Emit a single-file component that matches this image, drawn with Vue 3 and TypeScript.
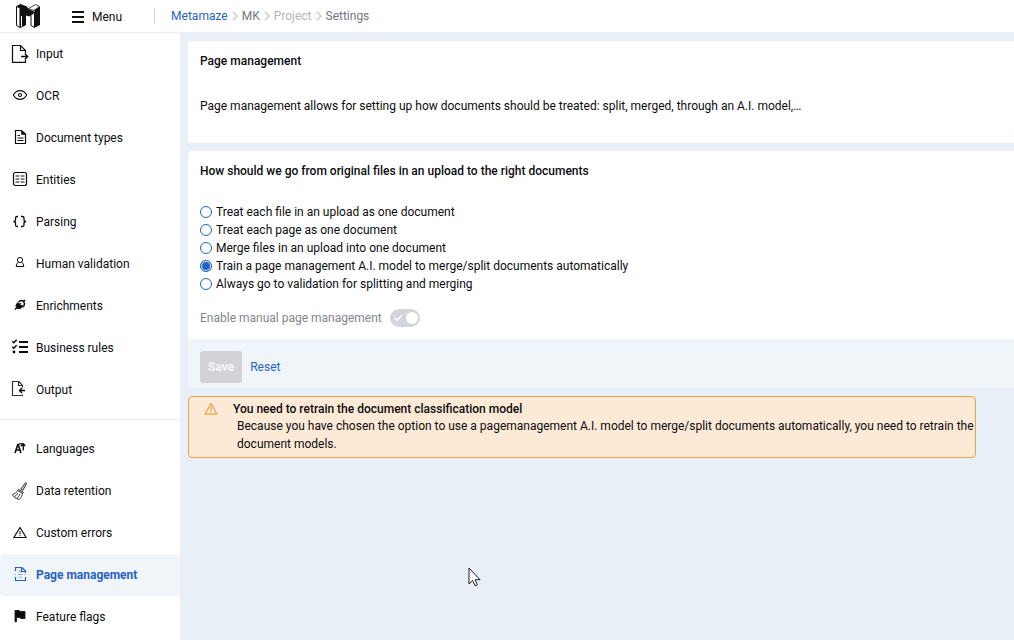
<script setup lang="ts">
import { ref } from 'vue'

interface NavItem {
  label: string
  icon: string
}

const mainItems: NavItem[] = [
  { label: 'Input', icon: 'input' },
  { label: 'OCR', icon: 'eye' },
  { label: 'Document types', icon: 'document' },
  { label: 'Entities', icon: 'table' },
  { label: 'Parsing', icon: 'braces' },
  { label: 'Human validation', icon: 'person' },
  { label: 'Enrichments', icon: 'plug' },
  { label: 'Business rules', icon: 'checklist' },
  { label: 'Output', icon: 'output' },
]

const settingItems: NavItem[] = [
  { label: 'Languages', icon: 'language' },
  { label: 'Data retention', icon: 'broom' },
  { label: 'Custom errors', icon: 'warning' },
  { label: 'Page management', icon: 'page' },
  { label: 'Feature flags', icon: 'flag' },
]

const groups: NavItem[][] = [mainItems, settingItems]
const active = ref('Page management')

const crumbs = [
  { label: 'Metamaze', tone: 'primary' },
  { label: 'MK', tone: 'dark' },
  { label: 'Project', tone: 'light' },
  { label: 'Settings', tone: 'dark' },
]

const options = [
  'Treat each file in an upload as one document',
  'Treat each page as one document',
  'Merge files in an upload into one document',
  'Train a page management A.I. model to merge/split documents automatically',
  'Always go to validation for splitting and merging',
]
const selected = ref(3)
const manual = ref(true)
</script>

<template>
  <div class="app">
    <header class="topbar">
      <a href="#" class="logo" aria-label="Metamaze home">
        <svg width="26" height="26" viewBox="0 0 26 26">
          <path d="M1.5 3.5 5 5V24.500L1.500 22.500Z" fill="#fff" stroke="#111" stroke-width="1" />
          <path d="M1.500 3 5.500 1 12 3.500 13.500 6 19 8.500V10L14.500 13.500 11 12.500V22L6.500 24.500 5 24.500V5Z" fill="#111" />
          <path d="M6.500 13V23.500" stroke="#fff" stroke-width="1" />
          <path d="M13.500 5.500 20.500 1.500 24.500 3.500 19 7.500Z" fill="#fff" stroke="#111" stroke-width=".8" />
          <path d="M16 12.500 19.500 9V24.500L16 22.500Z" fill="#fff" stroke="#111" stroke-width="1" />
          <path d="M19.500 7 25 3.500V22L19.500 24.800Z" fill="#111" />
        </svg>
      </a>
      <button type="button" class="menu">
        <svg width="12" height="12" viewBox="0 0 12 12"><path d="M0 1H12M0 6H12M0 11H12" stroke="#111" stroke-width="2" /></svg>
        Menu
      </button>
      <nav class="crumbs" aria-label="Breadcrumb">
        <template v-for="(c, i) in crumbs" :key="c.label">
          <svg v-if="i" class="chevron" width="6" height="10" viewBox="0 0 6 10"><path d="M1 1 5 5 1 9" fill="none" stroke="#c9cacf" stroke-width="1.500" /></svg>
          <a href="#" :class="c.tone">{{ c.label }}</a>
        </template>
      </nav>
    </header>

    <div class="body">
      <nav class="sidebar" aria-label="Project settings">
        <ul v-for="(group, g) in groups" :key="g">
          <li v-for="item in group" :key="item.label">
            <a href="#" :class="{ active: item.label === active }" @click.prevent="active = item.label">
              <svg width="20" height="20" viewBox="0 0 20 20" fill="none" stroke="currentColor" stroke-width="1.200">
                <template v-if="item.icon === 'input'">
                  <path d="M15.500 16V18.400H2.500V1.500H10.500L15.500 6.500V9M10.500 1.500V6.500H15.500" />
                  <path d="M11 12.500H17.500M14.800 9.500 17.700 12.500 14.800 15.500" stroke-width="1.400" />
                </template>
                <template v-else-if="item.icon === 'eye'">
                  <path d="M3.300 9C5 6 7.300 4.600 10 4.600S15 6 16.700 9C15 12 12.700 13.400 10 13.400S5 12 3.300 9Z" stroke-width="1.100" />
                  <circle cx="10" cy="9" r="1.500" stroke-width="1.100" />
                </template>
                <template v-else-if="item.icon === 'document'">
                  <path d="M5.500 2.500H11.500L15.500 6V15.500H5.500Z" />
                  <path d="M11.500 2.500V6.500H15.500Z" fill="currentColor" stroke-width=".6" />
                  <path d="M7.500 7.500H10M7.500 10H13.500M7.500 12.500H13.500" stroke-width="1" />
                </template>
                <template v-else-if="item.icon === 'table'">
                  <rect x="3.500" y="2.500" width="13" height="13" rx="2" />
                  <path d="M5.500 6H9.300M10.700 6H14.500M5.500 9H9.300M10.700 9H14.500M5.500 12H9.300M10.700 12H14.500" stroke-width="1" />
                </template>
                <template v-else-if="item.icon === 'braces'">
                  <path d="M8 4.500H7Q5.500 4.500 5.500 6V8Q5.500 9.500 3.300 9.500 5.500 9.500 5.500 11V13Q5.500 14.500 7 14.500H8M11 4.500H12.500Q14 4.500 14 6V8Q14 9.500 16.200 9.500 14 9.500 14 11V13Q14 14.500 12.500 14.500H11" stroke-width="1.300" />
                </template>
                <template v-else-if="item.icon === 'person'">
                  <circle cx="10" cy="6" r="2.600" stroke-width="1" />
                  <path d="M8.300 8.200Q6.300 9.500 6.200 12.500H13.800Q13.700 9.500 11.700 8.200" stroke-width="1" />
                </template>
                <template v-else-if="item.icon === 'plug'">
                  <path d="M5 13.500 6.500 12M13.500 5.500 15 4" stroke-width="1.500" />
                  <path d="M8 6.500 6.500 8Q5.200 10.500 6.800 12.200 9 13.500 11.200 12L12 11Z" fill="currentColor" stroke-width=".8" />
                  <path d="M8.500 6 9.800 4.900Q12 4 13.800 5.800 15.300 8 13.800 10L12.500 11.200" stroke-width="1.500" />
                  <path d="M9 9 10.800 7.200M11 10.500 12.500 9" stroke-width="1.300" />
                </template>
                <template v-else-if="item.icon === 'checklist'">
                  <path d="M9 4H18M9 9H18M9 14H18" stroke-width="2" />
                  <path d="M2.300 3.200 3.800 4.700 6.700 1.700M2.300 8.700 3.800 10.200 6.700 7.200" stroke-width="1.500" />
                  <circle cx="4" cy="14" r="1.400" fill="currentColor" stroke="none" />
                </template>
                <template v-else-if="item.icon === 'output'">
                  <path d="M12.500 14.500V15.500H2.500V1.500H9L12.500 5.500V7.500M8.500 1.500V5.500H12.500" stroke="#33333d" />
                  <path d="M15 10.500H9.800M12 8 9.500 10.500 12 13" stroke-width="1.400" />
                </template>
                <template v-else-if="item.icon === 'language'">
                  <path d="M5 14 7.800 5.500H8.200L11 14M6.300 11H9.800" stroke-width="1.600" />
                  <path d="M9 4.800H13M13.300 11.500V4.500M11 7.200 13.300 4.800 15.300 7" stroke-width="1.300" />
                </template>
                <template v-else-if="item.icon === 'broom'">
                  <g stroke="#44444d" stroke-width="1">
                    <path d="M10.800 8 15.400 1.800Q16.500 1.300 16.500 2.700L13 9.300Z" fill="#bdbdc3" />
                    <path d="M8.700 8.300 13.300 11.200 12.600 12.600 7.700 9.700Z" fill="#aaaab0" />
                    <path d="M7.700 9.700Q6 12.700 2.300 13.500 4 17.500 9.300 18.600 12 16 12.600 12.600M4.500 16 8 12M7 17.700 10 13" />
                  </g>
                </template>
                <template v-else-if="item.icon === 'warning'">
                  <path d="M10 4.500 16.200 14.500H3.800Z" stroke-linejoin="round" />
                  <path d="M10 8V11.200M10 12.100V13.200" stroke-width="1" />
                </template>
                <template v-else-if="item.icon === 'page'">
                  <path d="M5.500 6V2.500H12L15.500 6V8M11.500 2.500V6.500H15.500M5.500 12V15.500H15.500V12" />
                  <path d="M4.500 9.500H6M8 9.500H12.500M14.500 9.500H16M8.500 7.500 10.200 6.200 12 7.500M8.500 11.500 10.200 12.800 12 11.500" stroke-width="1" opacity=".5" />
                </template>
                <template v-else>
                  <path d="M5 3.500H9L10.500 4.500H15V11.500H11L9.500 10.500H6.500V14.800H5Z" fill="currentColor" stroke-width=".8" />
                </template>
              </svg>
              <span>{{ item.label }}</span>
            </a>
          </li>
        </ul>
      </nav>

      <main>
        <section class="card intro">
          <h1>Page management</h1>
          <p>Page management allows for setting up how documents should be treated: split, merged, through an A.I. model,…</p>
        </section>

        <form class="card" @submit.prevent>
          <fieldset>
            <legend>How should we go from original files in an upload to the right documents</legend>
            <label v-for="(option, i) in options" :key="option" class="option">
              <input v-model="selected" type="radio" name="strategy" :value="i" />
              <span>{{ option }}</span>
            </label>
            <label class="toggle">
              <span>Enable manual page management</span>
              <span class="switch">
                <input v-model="manual" type="checkbox" role="switch" disabled />
                <svg width="30" height="18" viewBox="0 0 30 18"><path d="M4.500 9 7 11.500 11.500 6.500" fill="none" stroke="#fff" stroke-width="1.500" /><circle cx="22" cy="9" r="6" fill="#fff" /></svg>
              </span>
            </label>
          </fieldset>
          <footer>
            <button type="submit" class="save" disabled>Save</button>
            <button type="reset" class="reset">Reset</button>
          </footer>
        </form>

        <div class="alert" role="alert">
          <svg width="14" height="14" viewBox="0 0 14 14" fill="none" stroke="#f2a444" stroke-width="1.300"><path d="M7 1.500 13 12.200H1Z" stroke-linejoin="round" /><path d="M7 5V8.500M7 9.500V10.800" /></svg>
          <div>
            <h2>You need to retrain the document classification model</h2>
            <p>Because you have chosen the option to use a pagemanagement A.I. model to merge/split documents automatically, you need to retrain the document models.</p>
          </div>
        </div>
      </main>
    </div>

    <svg class="pointer" width="13" height="20" viewBox="0 0 13 20"><path d="M1 1V17L4.700 13.500 7 18.800 9.300 17.800 7.200 12.700H12Z" fill="#fff" stroke="#1b1b26" stroke-width="1" /></svg>
  </div>
</template>

<style>
body {
  margin: 0;
  background: #e8eff7;
}
</style>

<style scoped>
.app {
  display: flex;
  flex-direction: column;
  min-height: 100vh;
  box-sizing: border-box;
  font-family: Roboto, "Liberation Sans", sans-serif;
  font-size: 12px;
  line-height: 18px;
  color: #0c0c10;
}
.app *,
.app *::before {
  box-sizing: border-box;
}
a {
  text-decoration: none;
  color: inherit;
}
button {
  font: inherit;
  border: 0;
  padding: 0;
  background: none;
  cursor: pointer;
}
svg {
  display: block;
  flex: none;
}
h1,
h2,
p,
ul,
fieldset {
  margin: 0;
  padding: 0;
  border: 0;
}
.topbar {
  display: flex;
  align-items: center;
  height: 33px;
  padding-left: 15px;
  background: #fff;
  border-bottom: 1px solid #e8eff7;
}
.menu {
  display: flex;
  align-items: center;
  gap: 8px;
  margin-left: 31px;
  padding-top: 1px;
  color: #0c0c10;
}
.crumbs {
  display: flex;
  align-items: center;
  gap: 4px;
  height: 16px;
  margin-left: 32px;
  padding-left: 16px;
  border-left: 1px solid #d2d4d9;
}
.primary {
  color: #2762c3;
}
.dark {
  color: #75767d;
}
.light {
  color: #b5b6bc;
}
.body {
  display: flex;
  flex: 1;
}
.sidebar {
  flex: 0 0 180px;
  background: #fff;
}
.sidebar ul {
  list-style: none;
}
.sidebar ul + ul {
  margin-top: 8px;
  padding-top: 8px;
  border-top: 1px solid #eeeff1;
}
.sidebar a {
  display: flex;
  align-items: center;
  gap: 6px;
  height: 42px;
  padding-left: 10px;
  border-radius: 4px;
}
.sidebar .active {
  background: #f0f5fa;
  color: #2762c3;
  font-weight: 700;
}
main {
  display: flex;
  flex-direction: column;
  gap: 8px;
  flex: 1;
  min-width: 0;
  padding: 8px 0 8px 8px;
}
.card {
  background: #fff;
  border-radius: 4px 0 0 4px;
  overflow: hidden;
}
.intro {
  padding: 11px 12px 28px;
}
h1,
h2,
legend {
  font-size: 12px;
  line-height: 18px;
  font-weight: 500;
}
.intro p {
  margin-top: 27px;
}
fieldset {
  padding: 11px 12px 12px;
  min-width: 0;
}
legend {
  float: left;
  width: 100%;
  padding: 0;
  margin-bottom: 23px;
}
.option {
  clear: both;
  display: flex;
  align-items: center;
  gap: 4px;
}
input {
  appearance: none;
  margin: 0;
}
.option input {
  width: 12px;
  height: 12px;
  border: 1px solid #1f64c4;
  border-radius: 50%;
}
.option input:checked {
  background: #1f64c4;
  box-shadow: inset 0 0 0 1px #fff;
}
.toggle {
  display: flex;
  align-items: center;
  gap: 8px;
  width: max-content;
  margin-top: 16px;
  color: #85868c;
}
.switch {
  display: grid;
}
.switch > * {
  grid-area: 1 / 1;
}
.switch input {
  width: 30px;
  height: 18px;
  border-radius: 9px;
  background: #d4d5da;
}
footer {
  display: flex;
  align-items: center;
  gap: 8px;
  padding: 12px 12px 5px;
  background: #f0f5fa;
}
.save {
  height: 32px;
  padding: 0 8px;
  border-radius: 3px;
  background: #d2d3d9;
  color: #f5f6f8;
  font-weight: 700;
}
.reset {
  color: #2762c3;
}
.alert {
  display: flex;
  gap: 15px;
  margin-right: 38px;
  padding: 4px 0 4px 15px;
  border: 1px solid #f0a04a;
  border-radius: 4px;
  background: #fcead7;
}
.alert h2 {
  line-height: 16px;
}
.alert svg {
  margin-top: 1px;
}
.alert p {
  padding-left: 4px;
}
.pointer {
  position: absolute;
  left: 468px;
  top: 567px;
  pointer-events: none;
}
</style>
